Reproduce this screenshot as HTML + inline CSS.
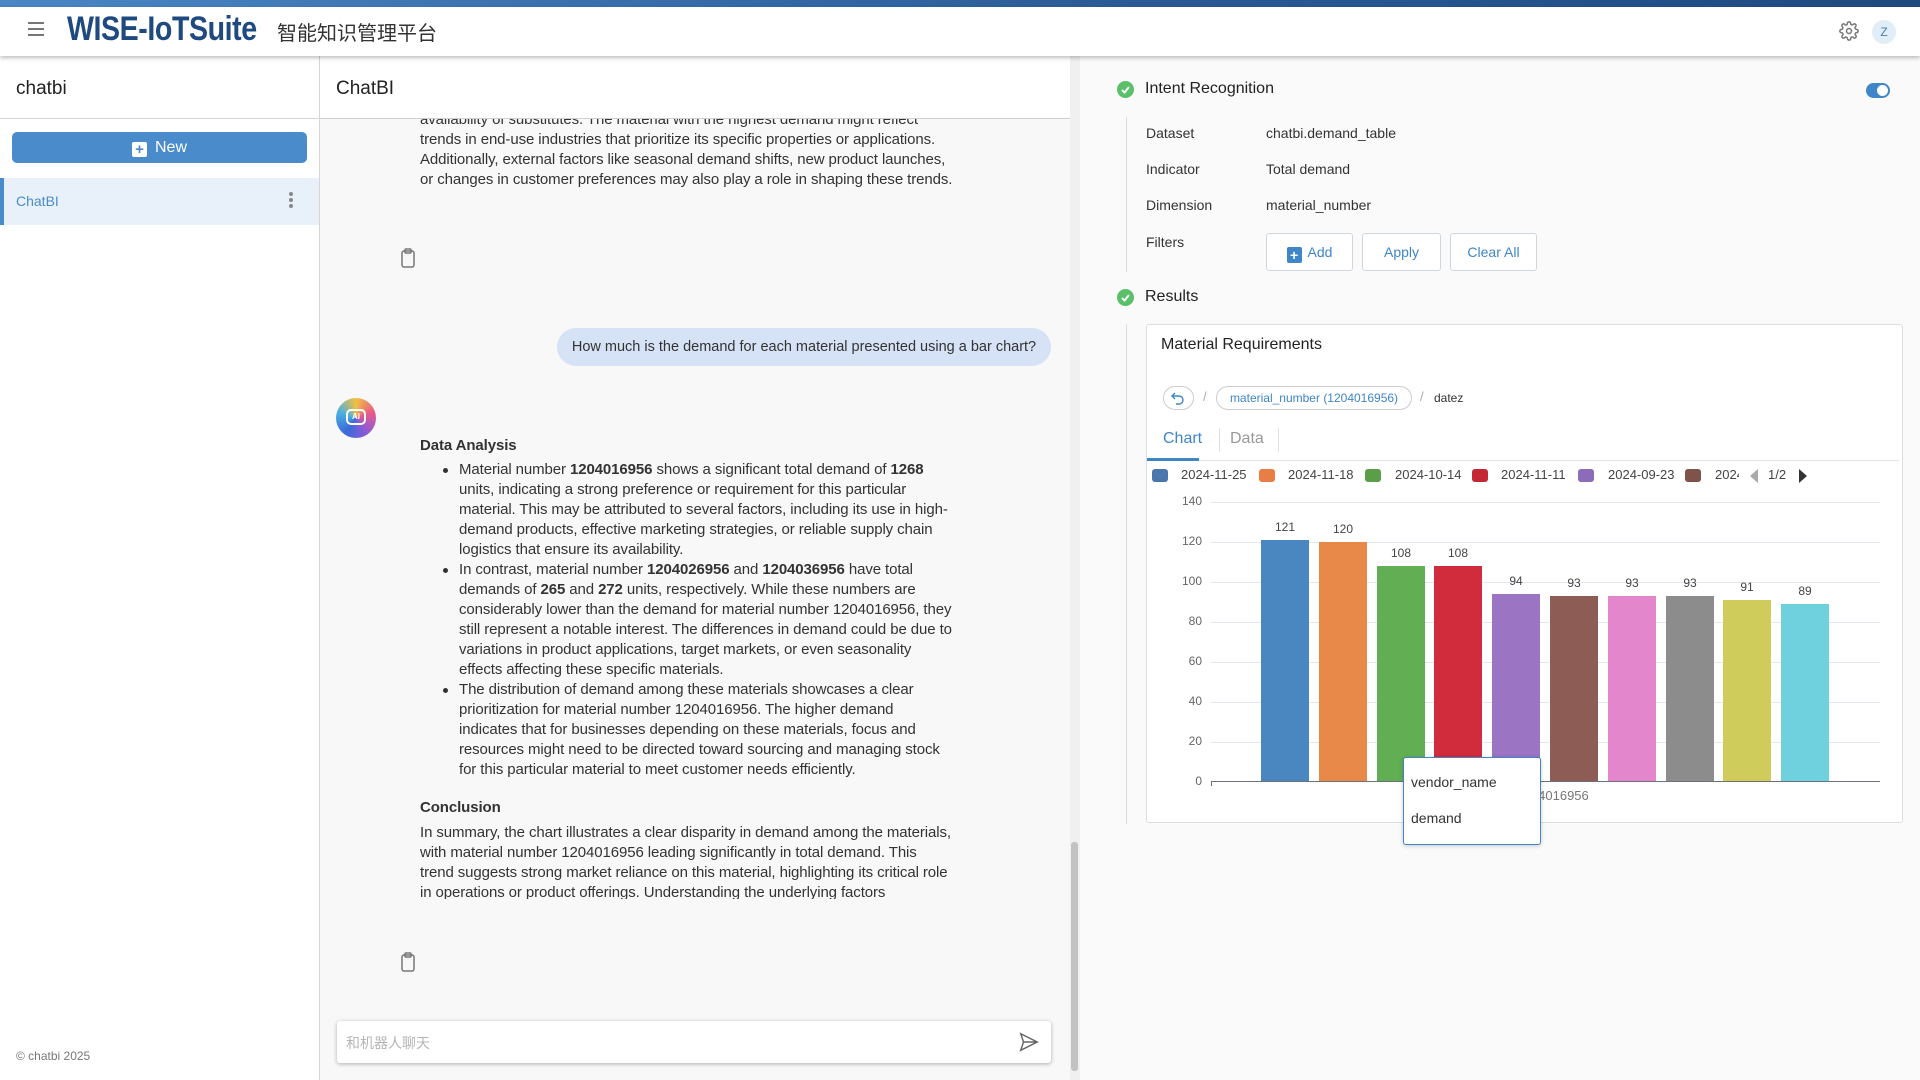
<!DOCTYPE html>
<html><head><meta charset="utf-8">
<style>
*{box-sizing:border-box;margin:0;padding:0}
body{width:1920px;height:1080px;overflow:hidden;position:relative;background:#fafafa;font-family:"Liberation Sans","Noto Sans CJK SC",sans-serif;color:#333}
.a{position:absolute}
.topbar{left:0;top:0;width:1920px;height:7px;background:linear-gradient(90deg,#4a86c4,#2a5a96 60%,#1f4a80)}
.header{left:0;top:7px;width:1920px;height:49px;background:#fff;box-shadow:0 2px 4px rgba(0,0,0,.25);z-index:5}
.side{left:0;top:56px;width:320px;height:1024px;background:#fff;border-right:1px solid #d6d6d6}
.chat{left:320px;top:56px;width:760px;height:1024px;background:#f8f8f8}
.txt{font-size:15px;line-height:20px;white-space:nowrap;color:#333;letter-spacing:-0.1px}
.lbl{font-size:14px;color:#333}
.btn{position:absolute;top:233px;height:38px;border:1px solid #cfd6de;border-radius:3px;background:#fff;color:#3f86c8;font-size:14px;text-align:center;line-height:36px}
.bar{position:absolute;width:48px;bottom:298px}
.bl{position:absolute;font-size:12px;color:#444;width:48px;text-align:center}
.yl{position:absolute;font-size:12px;color:#666;width:30px;text-align:right;left:1172px}
.gl{position:absolute;left:1211px;width:669px;height:1px;background:#e3e6ee}
.sw{position:absolute;top:469px;width:16px;height:13px;border-radius:3px}
.lt{position:absolute;top:467px;font-size:13px;color:#444}
</style></head><body>
<div class="a topbar"></div>
<div class="a header">
  <div class="a" style="left:28px;top:15px;width:16px;height:2px;background:#777;box-shadow:0 6px 0 #777,0 12px 0 #777"></div>
  <div class="a" style="left:67px;top:3px;font-size:34px;font-weight:bold;color:#1f4a80;transform:scaleX(.84);transform-origin:left;letter-spacing:-0.5px;white-space:nowrap">WISE-IoTSuite</div>
  <div class="a" style="left:277px;top:10px;font-size:20px;color:#333;white-space:nowrap">智能知识管理平台</div>
  <svg class="a" style="left:1839px;top:14px" width="20" height="20" viewBox="0 0 24 24" fill="none" stroke="#777" stroke-width="1.8"><circle cx="12" cy="12" r="3"/><path d="M19.4 15a1.7 1.7 0 0 0 .3 1.8l.1.1a2 2 0 1 1-2.8 2.8l-.1-.1a1.7 1.7 0 0 0-1.8-.3 1.7 1.7 0 0 0-1 1.5V21a2 2 0 1 1-4 0v-.1a1.7 1.7 0 0 0-1.1-1.5 1.7 1.7 0 0 0-1.8.3l-.1.1a2 2 0 1 1-2.8-2.8l.1-.1a1.7 1.7 0 0 0 .3-1.8 1.7 1.7 0 0 0-1.5-1H3a2 2 0 1 1 0-4h.1a1.7 1.7 0 0 0 1.5-1.1 1.7 1.7 0 0 0-.3-1.8l-.1-.1a2 2 0 1 1 2.8-2.8l.1.1a1.7 1.7 0 0 0 1.8.3H9a1.7 1.7 0 0 0 1-1.5V3a2 2 0 1 1 4 0v.1a1.7 1.7 0 0 0 1 1.5 1.7 1.7 0 0 0 1.8-.3l.1-.1a2 2 0 1 1 2.8 2.8l-.1.1a1.7 1.7 0 0 0-.3 1.8V9a1.7 1.7 0 0 0 1.5 1H21a2 2 0 1 1 0 4h-.1a1.7 1.7 0 0 0-1.5 1z"/></svg>
  <div class="a" style="left:1872px;top:13px;width:24px;height:24px;border-radius:50%;background:#e1eef8;color:#4a7fb5;font-size:12px;text-align:center;line-height:24px">Z</div>
</div>

<!-- sidebar -->
<div class="a side">
  <div class="a" style="left:0;top:0;width:319px;height:63px;border-bottom:1px solid #d6d6d6"></div>
  <div class="a" style="left:16px;top:22px;font-size:19px;color:#222">chatbi</div>
  <div class="a" style="left:12px;top:76px;width:295px;height:31px;border-radius:5px;background:#4a8ccb;color:#fff;font-size:16px;text-align:center;line-height:31px">
    <span style="display:inline-block;width:15px;height:15px;background:#fff;border-radius:2px;color:#4a8ccb;font-weight:bold;font-size:15px;line-height:15px;vertical-align:-2px;margin-right:8px">+</span>New</div>
  <div class="a" style="left:0;top:122px;width:319px;height:47px;background:#e8f0fa;border-left:4px solid #4a8ccb"></div>
  <div class="a" style="left:16px;top:137px;font-size:14px;color:#4a8ccb">ChatBI</div>
  <div class="a" style="left:289px;top:136px;width:4px;height:4px;border-radius:50%;background:#888;box-shadow:0 6px 0 #888,0 12px 0 #888"></div>
  <div class="a" style="left:16px;top:993px;font-size:12px;color:#777">© chatbi 2025</div>
</div>

<!-- chat -->
<div class="a chat">
  <div class="a" style="left:750px;top:0;width:10px;height:1024px;background:#f0f0f0"></div>
  <div class="a" style="left:751px;top:786px;width:7px;height:229px;background:#c2c2c2;border-radius:3px"></div>
</div>

<div class="a txt" style="left:420px;top:110px">availability of substitutes. The material with the highest demand might reflect<br>trends in end-use industries that prioritize its specific properties or applications.<br>Additionally, external factors like seasonal demand shifts, new product launches,<br>or changes in customer preferences may also play a role in shaping these trends.</div>
<div class="a" style="left:320px;top:56px;width:750px;height:63px;background:#fff;border-bottom:1px solid #d0d0d0"></div>
<div class="a" style="left:336px;top:78px;font-size:19px;color:#222">ChatBI</div>

<svg class="a" style="left:400px;top:248px" width="16" height="20" viewBox="0 0 16 20" fill="none" stroke="#777" stroke-width="1.5"><rect x="2" y="3" width="12" height="16" rx="2"/><rect x="5" y="1" width="6" height="4" rx="1"/></svg>

<div class="a" style="left:557px;top:328px;width:494px;height:38px;border-radius:19px;background:#d6e2f5;font-size:14.5px;color:#333;line-height:38px;text-align:center;white-space:nowrap">How much is the demand for each material presented using a bar chart?</div>

<div class="a" style="left:336px;top:398px;width:40px;height:40px;border-radius:50%;background:conic-gradient(#f0c040,#e85a8a,#8a5ad8,#3a6ad8,#4ab0e0,#f0c040)"></div>
<div class="a" style="left:346px;top:409px;width:20px;height:16px;border:2px solid #fff;border-radius:5px;color:#fff;font-size:8px;font-weight:bold;text-align:center;line-height:12px">AI</div>

<div class="a txt" style="left:420px;top:436px;font-weight:bold">Data Analysis</div>
<div class="a txt" style="left:459px;top:460px">Material number <b>1204016956</b> shows a significant total demand of <b>1268</b><br>units, indicating a strong preference or requirement for this particular<br>material. This may be attributed to several factors, including its use in high-<br>demand products, effective marketing strategies, or reliable supply chain<br>logistics that ensure its availability.<br>In contrast, material number <b>1204026956</b> and <b>1204036956</b> have total<br>demands of <b>265</b> and <b>272</b> units, respectively. While these numbers are<br>considerably lower than the demand for material number 1204016956, they<br>still represent a notable interest. The differences in demand could be due to<br>variations in product applications, target markets, or even seasonality<br>effects affecting these specific materials.<br>The distribution of demand among these materials showcases a clear<br>prioritization for material number 1204016956. The higher demand<br>indicates that for businesses depending on these materials, focus and<br>resources might need to be directed toward sourcing and managing stock<br>for this particular material to meet customer needs efficiently.</div>
<div class="a" style="left:443px;top:468px;width:5px;height:5px;border-radius:50%;background:#333"></div>
<div class="a" style="left:443px;top:568px;width:5px;height:5px;border-radius:50%;background:#333"></div>
<div class="a" style="left:443px;top:688px;width:5px;height:5px;border-radius:50%;background:#333"></div>

<div class="a txt" style="left:420px;top:798px;font-weight:bold">Conclusion</div>
<div class="a" style="left:420px;top:823px;height:76px;overflow:hidden"><div class="txt">In summary, the chart illustrates a clear disparity in demand among the materials,<br>with material number 1204016956 leading significantly in total demand. This<br>trend suggests strong market reliance on this material, highlighting its critical role<br>in operations or product offerings. Understanding the underlying factors</div></div>

<svg class="a" style="left:400px;top:952px" width="16" height="20" viewBox="0 0 16 20" fill="none" stroke="#777" stroke-width="1.5"><rect x="2" y="3" width="12" height="16" rx="2"/><rect x="5" y="1" width="6" height="4" rx="1"/></svg>

<div class="a" style="left:337px;top:1021px;width:714px;height:42px;background:#fff;border-radius:3px;box-shadow:0 1px 4px rgba(0,0,0,.3)"></div>
<div class="a" style="left:346px;top:1033px;font-size:14px;color:#b5b5b5">和机器人聊天</div>
<svg class="a" style="left:1018px;top:1031px" width="22" height="22" viewBox="0 0 24 24" fill="none" stroke="#666" stroke-width="1.6"><path d="M3 3l18 9-18 9 3-9z M6 12h15"/></svg>

<!-- right panel -->
<div class="a" style="left:1117px;top:81px;width:17px;height:17px;border-radius:50%;background:#5cbf6c"></div>
<svg class="a" style="left:1117px;top:81px" width="17" height="17" viewBox="0 0 17 17"><path d="M5 9l2.5 2.5L12 6" stroke="#fff" stroke-width="1.8" fill="none"/></svg>
<div class="a" style="left:1145px;top:80px;font-size:16px;color:#222">Intent Recognition</div>
<div class="a" style="left:1866px;top:83px;width:24px;height:15px;border-radius:8px;background:#3f86c8"></div>
<div class="a" style="left:1877px;top:85px;width:11px;height:11px;border-radius:50%;background:#fff"></div>

<div class="a" style="left:1126px;top:117px;width:1px;height:155px;background:#ddd"></div>
<div class="a lbl" style="left:1146px;top:125px">Dataset</div>
<div class="a lbl" style="left:1266px;top:125px">chatbi.demand_table</div>
<div class="a lbl" style="left:1146px;top:161px">Indicator</div>
<div class="a lbl" style="left:1266px;top:161px">Total demand</div>
<div class="a lbl" style="left:1146px;top:197px">Dimension</div>
<div class="a lbl" style="left:1266px;top:197px">material_number</div>
<div class="a lbl" style="left:1146px;top:234px">Filters</div>
<div class="btn" style="left:1266px;width:87px"><span style="display:inline-block;width:15px;height:16px;background:#3f86c8;border-radius:2px;color:#fff;font-weight:bold;font-size:14px;line-height:16px;vertical-align:-3px;margin-right:6px">+</span>Add</div>
<div class="btn" style="left:1362px;width:79px">Apply</div>
<div class="btn" style="left:1450px;width:87px">Clear All</div>

<div class="a" style="left:1117px;top:289px;width:17px;height:17px;border-radius:50%;background:#5cbf6c"></div>
<svg class="a" style="left:1117px;top:289px" width="17" height="17" viewBox="0 0 17 17"><path d="M5 9l2.5 2.5L12 6" stroke="#fff" stroke-width="1.8" fill="none"/></svg>
<div class="a" style="left:1145px;top:288px;font-size:16px;color:#222">Results</div>
<div class="a" style="left:1126px;top:324px;width:1px;height:500px;background:#ddd"></div>

<div class="a" style="left:1146px;top:324px;width:757px;height:499px;background:#fff;border:1px solid #ddd;border-radius:3px"></div>
<div class="a" style="left:1161px;top:336px;font-size:16px;color:#222">Material Requirements</div>
<div class="a" style="left:1163px;top:386px;width:31px;height:24px;border:1px solid #ccc;border-radius:12px"></div>
<svg class="a" style="left:1170px;top:390px" width="16" height="16" viewBox="0 0 16 16" fill="none" stroke="#3f86c8" stroke-width="1.4"><path d="M5 3L2 6l3 3M2 6h7a4 4 0 0 1 0 8H6"/></svg>
<div class="a" style="left:1203px;top:389px;font-size:13px;color:#aaa">/</div>
<div class="a" style="left:1216px;top:386px;width:196px;height:24px;border:1px solid #ccc;border-radius:12px;font-size:12px;color:#3f86c8;text-align:center;line-height:22px">material_number (1204016956)</div>
<div class="a" style="left:1420px;top:389px;font-size:13px;color:#aaa">/</div>
<div class="a" style="left:1434px;top:391px;font-size:12px;color:#333">datez</div>

<div class="a" style="left:1163px;top:430px;font-size:16px;color:#3f86c8">Chart</div>
<div class="a" style="left:1219px;top:428px;width:1px;height:24px;background:#e0e0e0"></div>
<div class="a" style="left:1230px;top:430px;font-size:16px;color:#999">Data</div>
<div class="a" style="left:1278px;top:428px;width:1px;height:24px;background:#e0e0e0"></div>
<div class="a" style="left:1147px;top:460px;width:752px;height:1px;background:#e4e4e4"></div>
<div class="a" style="left:1147px;top:458px;width:52px;height:3px;background:#3f86c8"></div>

<div class="sw" style="left:1152px;background:#4a78ad"></div><div class="lt" style="left:1181px">2024-11-25</div>
<div class="sw" style="left:1259px;background:#e87d45"></div><div class="lt" style="left:1288px">2024-11-18</div>
<div class="sw" style="left:1365px;background:#5a9e48"></div><div class="lt" style="left:1395px">2024-10-14</div>
<div class="sw" style="left:1472px;background:#c52835"></div><div class="lt" style="left:1501px">2024-11-11</div>
<div class="sw" style="left:1578px;background:#8c6bb8"></div><div class="lt" style="left:1608px">2024-09-23</div>
<div class="sw" style="left:1685px;background:#7f524b"></div><div class="lt" style="left:1715px;width:24px;overflow:hidden;white-space:nowrap">2024-11-04</div>
<div class="a" style="left:1750px;top:469px;width:0;height:0;border-top:7px solid transparent;border-bottom:7px solid transparent;border-right:8px solid #aaa"></div>
<div class="lt" style="left:1768px">1/2</div>
<div class="a" style="left:1799px;top:469px;width:0;height:0;border-top:7px solid transparent;border-bottom:7px solid transparent;border-left:8px solid #333"></div>

<div class="gl" style="top:502px"></div><div class="yl" style="top:494px">140</div>
<div class="gl" style="top:542px"></div><div class="yl" style="top:534px">120</div>
<div class="gl" style="top:582px"></div><div class="yl" style="top:574px">100</div>
<div class="gl" style="top:622px"></div><div class="yl" style="top:614px">80</div>
<div class="gl" style="top:662px"></div><div class="yl" style="top:654px">60</div>
<div class="gl" style="top:702px"></div><div class="yl" style="top:694px">40</div>
<div class="gl" style="top:742px"></div><div class="yl" style="top:734px">20</div>
<div class="yl" style="top:774px">0</div>

<div class="bar" style="left:1261px;height:242px;background:#4a86c0"></div><div class="bl" style="left:1261px;top:520px">121</div>
<div class="bar" style="left:1319px;height:240px;background:#e8894a"></div><div class="bl" style="left:1319px;top:522px">120</div>
<div class="bar" style="left:1377px;height:216px;background:#62ae52"></div><div class="bl" style="left:1377px;top:546px">108</div>
<div class="bar" style="left:1434px;height:216px;background:#d02c3c"></div><div class="bl" style="left:1434px;top:546px">108</div>
<div class="bar" style="left:1492px;height:188px;background:#9b74c4"></div><div class="bl" style="left:1492px;top:574px">94</div>
<div class="bar" style="left:1550px;height:186px;background:#8d5d55"></div><div class="bl" style="left:1550px;top:576px">93</div>
<div class="bar" style="left:1608px;height:186px;background:#e386cc"></div><div class="bl" style="left:1608px;top:576px">93</div>
<div class="bar" style="left:1666px;height:186px;background:#8c8c8c"></div><div class="bl" style="left:1666px;top:576px">93</div>
<div class="bar" style="left:1723px;height:182px;background:#cfcc5c"></div><div class="bl" style="left:1723px;top:580px">91</div>
<div class="bar" style="left:1781px;height:178px;background:#6fd0de"></div><div class="bl" style="left:1781px;top:584px">89</div>
<div class="a" style="left:1211px;top:781px;width:669px;height:1px;background:#6e7079"></div>
<div class="a" style="left:1211px;top:781px;width:1px;height:5px;background:#6e7079"></div>
<div class="a" style="left:1463px;top:788px;font-size:13px;color:#777">material_1204016956</div>

<div class="a" style="left:1403px;top:757px;width:138px;height:88px;background:#fff;border:1px solid #3f86c8;border-radius:3px;box-shadow:0 1px 4px rgba(0,0,0,.2)"></div>
<div class="a" style="left:1411px;top:774px;font-size:14px;color:#333">vendor_name</div>
<div class="a" style="left:1411px;top:810px;font-size:14px;color:#333">demand</div>
</body></html>
